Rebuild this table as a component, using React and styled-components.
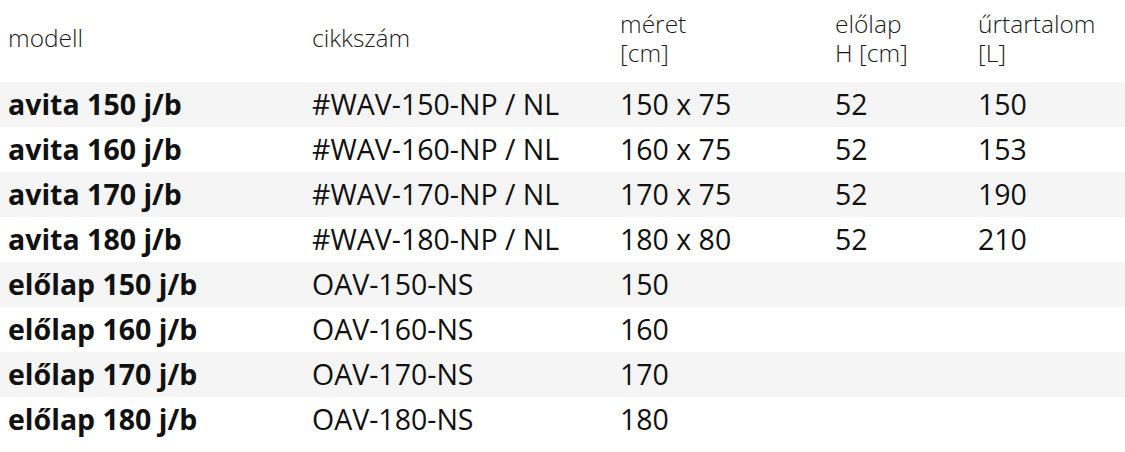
import React from 'react';
import styled, { createGlobalStyle } from 'styled-components';

const GlobalStyle = createGlobalStyle`
  html, body {
    margin: 0;
    padding: 0;
    background: #fff;
  }
  body {
    font-family: "Open Sans", "Liberation Sans", sans-serif;
    color: #111;
  }
`;

const rows = [
  { model: 'avita 150 j/b', code: '#WAV-150-NP / NL', size: '150 x 75', front: '52', volume: '150' },
  { model: 'avita 160 j/b', code: '#WAV-160-NP / NL', size: '160 x 75', front: '52', volume: '153' },
  { model: 'avita 170 j/b', code: '#WAV-170-NP / NL', size: '170 x 75', front: '52', volume: '190' },
  { model: 'avita 180 j/b', code: '#WAV-180-NP / NL', size: '180 x 80', front: '52', volume: '210' },
  { model: 'előlap 150 j/b', code: 'OAV-150-NS', size: '150' },
  { model: 'előlap 160 j/b', code: 'OAV-160-NS', size: '160' },
  { model: 'előlap 170 j/b', code: 'OAV-170-NS', size: '170' },
  { model: 'előlap 180 j/b', code: 'OAV-180-NS', size: '180' },
];

const Table = styled.div`
  width: 1125px;
  display: flex;
  flex-direction: column;
`;

const Row = styled.div`
  display: grid;
  grid-template-columns: 304px 308px 215px 143px 1fr;
  align-items: center;
  box-sizing: border-box;
  height: ${p => (p.$head ? '82px' : '45px')};
  padding-bottom: ${p => (p.$head ? '7px' : '0')};
  background: ${p => (p.$striped ? '#f5f5f5' : 'transparent')};
`;

const HeadCell = styled.div`
  padding-left: 8px;
  font-size: 24.5px;
  font-weight: 300;
  line-height: 29px;
  color: #1a1a1a;
  white-space: nowrap;
`;

const Cell = styled.div`
  padding-left: 8px;
  font-size: 28.5px;
  line-height: 45px;
  font-weight: ${p => (p.$bold ? 700 : 400)};
  white-space: nowrap;
`;

export default function App() {
  return (
    <>
      <GlobalStyle />
      <Table>
        <Row $head>
          <HeadCell>modell</HeadCell>
          <HeadCell>cikkszám</HeadCell>
          <HeadCell>méret<br />[cm]</HeadCell>
          <HeadCell>előlap<br />H [cm]</HeadCell>
          <HeadCell>űrtartalom<br />[L]</HeadCell>
        </Row>
        {rows.map((r, i) => (
          <Row key={r.model} $striped={i % 2 === 0}>
            <Cell $bold>{r.model}</Cell>
            <Cell>{r.code}</Cell>
            <Cell>{r.size}</Cell>
            <Cell>{r.front}</Cell>
            <Cell>{r.volume}</Cell>
          </Row>
        ))}
      </Table>
    </>
  );
}
